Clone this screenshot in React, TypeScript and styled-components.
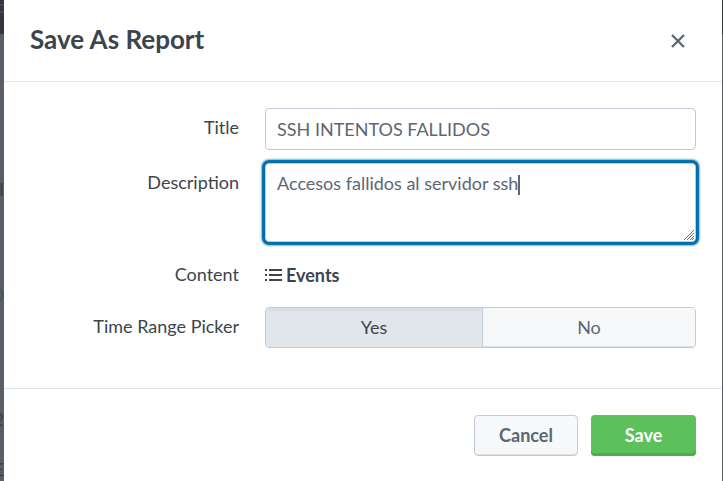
import React, { useState } from "react";
import styled, { createGlobalStyle, css } from "styled-components";

const GlobalStyle = createGlobalStyle`
  *, *::before, *::after { box-sizing: border-box; }
  html, body, #root { height: 100%; }
  body {
    margin: 0;
    overflow: hidden;
    color: #3c444d;
    font-family: Lato, "Open Sans", sans-serif;
    font-size: 18px;
    line-height: 24px;
  }
  button, input, textarea { font: inherit; }
`;

const Backdrop = styled.div`
  position: relative;
  min-height: 100%;
  display: flex;
  padding: 0 1px 0 4px;
  overflow: hidden;
  background: linear-gradient(#33373d 34px, #5a5f67 34px);
`;

const PageBehind = styled.div`
  position: absolute;
  inset: 0 auto 0 0;
  width: 4px;
  overflow: hidden;
`;

const Fragment = styled.span<{ $top: number; $faint?: boolean }>`
  position: absolute;
  top: ${(p) => p.$top}px;
  right: 0;
  color: ${(p) => (p.$faint ? "#4d535b" : "#3c4046")};
`;

const Dialog = styled.section`
  flex: 1;
  min-width: 0;
  background: #fff;
`;

const Header = styled.header`
  display: flex;
  align-items: center;
  justify-content: space-between;
  height: 82px;
  padding: 0 35px 0 26px;
  border-bottom: 1px solid #e1e6eb;
`;

const Heading = styled.h1`
  margin: 0 0 4px;
  font-size: 26px;
  line-height: 32px;
  font-weight: 700;
`;

const CloseButton = styled.button`
  display: flex;
  padding: 2px;
  border: 0;
  background: none;
  color: #5c6773;
  cursor: pointer;
`;

const Form = styled.form`
  margin: 0;
`;

const Fields = styled.div`
  display: grid;
  gap: 13px;
  padding: 26px 26px 40px;
`;

const Row = styled.div`
  display: grid;
  grid-template-columns: 209px minmax(0, 1fr);
  column-gap: 26px;
  align-items: start;
`;

const labelStyle = css`
  padding-top: 7px;
  text-align: right;
`;

const Label = styled.label`
  ${labelStyle}
`;

const LabelText = styled.span`
  ${labelStyle}
`;

const fieldStyle = css`
  display: block;
  width: 100%;
  margin: 0;
  padding: 8px 11px;
  border: 1px solid #c3cbd4;
  border-radius: 4px;
  background: #fff;
  color: #5c6773;
  outline: 0;
`;

const TextInput = styled.input`
  ${fieldStyle}
  height: 42px;
`;

const AreaWrap = styled.div`
  position: relative;
`;

const TextArea = styled.textarea`
  ${fieldStyle}
  height: 79px;
  padding: 7px 11px;
  caret-color: transparent;
  box-shadow: 0 0 1px 3px #006eaa, 0 0 2px 4px #8cc4e0;

  &::-webkit-resizer { background: transparent; }
`;

const AreaOverlay = styled.div`
  position: absolute;
  inset: 0;
  padding: 8px 12px;
  color: transparent;
  white-space: pre-wrap;
  pointer-events: none;
`;

const Caret = styled.span`
  display: inline-block;
  width: 2px;
  height: 20px;
  vertical-align: middle;
  background: #5c6773;
`;

const Grip = styled.svg`
  position: absolute;
  right: 2px;
  bottom: 2px;
`;

const ContentValue = styled.strong`
  display: flex;
  align-items: center;
  gap: 4px;
  padding: 8px 0 7px;
  font-weight: 700;
`;

const Segments = styled.div`
  display: grid;
  grid-template-columns: 217fr 214fr;
  border: 1px solid #c3cbd4;
  border-radius: 4px;
  overflow: hidden;
`;

const Segment = styled.button<{ $active: boolean }>`
  height: 39px;
  padding: 0 0 2px;
  border: 0;
  color: ${(p) => (p.$active ? "#3c444d" : "#5c6773")};
  background: ${(p) => (p.$active ? "#e1e6eb" : "#f7f8fa")};
  box-shadow: ${(p) => (p.$active ? "inset 0 3px #d8dfe7" : "inset 0 -1px #dcdfe3")};
  cursor: pointer;

  & + & { border-left: 1px solid #c3cbd4; }
`;

const Footer = styled.footer`
  display: flex;
  justify-content: flex-end;
  gap: 13px;
  padding: 26px;
  border-top: 1px solid #e1e6eb;
`;

const ActionButton = styled.button<{ $primary?: boolean }>`
  width: ${(p) => (p.$primary ? 105 : 104)}px;
  height: 41px;
  padding: 0 0 2px;
  border: ${(p) => (p.$primary ? "0" : "1px solid #c3cbd4")};
  border-radius: 4px;
  font-weight: 700;
  color: ${(p) => (p.$primary ? "#fff" : "#5c6773")};
  background: ${(p) => (p.$primary ? "#5cc05c" : "#f7f8fa")};
  box-shadow: ${(p) => (p.$primary ? "inset 0 -3px #53ab50" : "inset 0 -1px #dcdfe3")};
  cursor: pointer;
`;

const CloseIcon = () => (
  <svg width="14" height="14" viewBox="0 0 14 14" aria-hidden="true">
    <path d="M1 1l12 12M13 1L1 13" fill="none" stroke="currentColor" strokeWidth="2.3" />
  </svg>
);

const ListIcon = () => (
  <svg width="17" height="12" viewBox="0 0 17 12" fill="currentColor" aria-hidden="true">
    <path d="M0 0h2v2H0zM0 5h2v2H0zM0 10h2v2H0zM4 0h13v2H4zM4 5h13v2H4zM4 10h13v2H4z" />
  </svg>
);

const ResizeGrip = () => (
  <Grip width="10" height="10" viewBox="0 0 10 10" aria-hidden="true">
    <path d="M0 10L10 0M3 10l7-7M6 10l4-4M8 10l2-2" fill="none" stroke="#6b6b6b" />
  </Grip>
);

export default function App() {
  const [title, setTitle] = useState("SSH INTENTOS FALLIDOS");
  const [description, setDescription] = useState("Accesos fallidos al servidor ssh");
  const [picker, setPicker] = useState(true);

  return (
    <>
      <GlobalStyle />
      <Backdrop>
        <PageBehind aria-hidden="true">
          <Fragment $top={-6} $faint>c</Fragment>
          <Fragment $top={177}>I</Fragment>
          <Fragment $top={283} $faint>0</Fragment>
          <Fragment $top={407}>2</Fragment>
          <Fragment $top={457}>E</Fragment>
        </PageBehind>
        <Dialog role="dialog" aria-labelledby="dialog-title">
          <Header>
            <Heading id="dialog-title">Save As Report</Heading>
            <CloseButton type="button" aria-label="Close">
              <CloseIcon />
            </CloseButton>
          </Header>
          <Form onSubmit={(e) => e.preventDefault()}>
            <Fields>
              <Row>
                <Label htmlFor="title">Title</Label>
                <TextInput id="title" value={title} onChange={(e) => setTitle(e.target.value)} />
              </Row>
              <Row>
                <Label htmlFor="description">Description</Label>
                <AreaWrap>
                  <TextArea
                    id="description"
                    autoFocus
                    value={description}
                    onChange={(e) => setDescription(e.target.value)}
                  />
                  <AreaOverlay aria-hidden="true">
                    {description}
                    <Caret />
                    <ResizeGrip />
                  </AreaOverlay>
                </AreaWrap>
              </Row>
              <Row>
                <LabelText>Content</LabelText>
                <ContentValue>
                  <ListIcon />
                  Events
                </ContentValue>
              </Row>
              <Row>
                <LabelText id="picker-label">Time Range Picker</LabelText>
                <Segments role="group" aria-labelledby="picker-label">
                  <Segment type="button" $active={picker} aria-pressed={picker} onClick={() => setPicker(true)}>
                    Yes
                  </Segment>
                  <Segment type="button" $active={!picker} aria-pressed={!picker} onClick={() => setPicker(false)}>
                    No
                  </Segment>
                </Segments>
              </Row>
            </Fields>
            <Footer>
              <ActionButton type="button">Cancel</ActionButton>
              <ActionButton type="submit" $primary>
                Save
              </ActionButton>
            </Footer>
          </Form>
        </Dialog>
      </Backdrop>
    </>
  );
}
